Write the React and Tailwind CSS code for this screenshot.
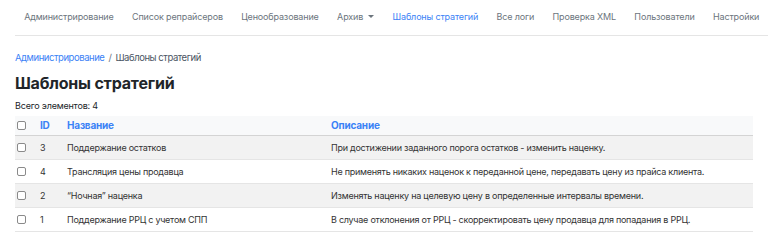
import React from "react";

const navItems = [
  { label: "Администрирование" },
  { label: "Список репрайсеров" },
  { label: "Ценообразование" },
  { label: "Архив", dropdown: true },
  { label: "Шаблоны стратегий", active: true },
  { label: "Все логи" },
  { label: "Проверка XML" },
  { label: "Пользователи" },
  { label: "Настройки" },
];

const rows = [
  { id: 3, name: "Поддержание остатков", desc: "При достижении заданного порога остатков - изменить наценку." },
  { id: 4, name: "Трансляция цены продавца", desc: "Не применять никаких наценок к переданной цене, передавать цену из прайса клиента." },
  { id: 2, name: "\u201cНочная\u201d наценка", desc: "Изменять наценку на целевую цену в определенные интервалы времени." },
  { id: 1, name: "Поддержание РРЦ с учетом СПП", desc: "В случае отклонения от РРЦ - скорректировать цену продавца для попадания в РРЦ." },
];

const Box = () => (
  <span className="block w-[9px] h-[9px] border border-[#8a8a8a] rounded-[2px] bg-white" />
);

export default function App() {
  return (
    <div className="w-[768px] h-[245px] bg-white overflow-hidden text-[#212529]" style={{ fontFamily: "Inter, 'Noto Sans', sans-serif" }}>
      <div className="pl-[15px]">
        <nav className="flex items-center h-[36px] pb-[2px] border-b border-[#e5e5e5] text-[9px] text-[#6c757d] tracking-[-0.15px]">
          {navItems.map((item) => (
            <span
              key={item.label}
              className={`px-[9.2px] flex items-center whitespace-nowrap ${item.active ? "text-[#3b82f6]" : ""}`}
            >
              {item.label}
              {item.dropdown && (
                <span className="ml-[5px] inline-block w-0 h-0 border-x-[3px] border-x-transparent border-t-[3.5px] border-t-[#6c757d]" />
              )}
            </span>
          ))}
        </nav>
      </div>
      <div className="px-[15px]">
        <div className="mt-[15px] text-[9.5px] tracking-[-0.45px] flex gap-[4px]">
          <span className="text-[#3b82f6]">Администрирование</span>
          <span className="text-[#6c757d]">/</span>
          <span className="text-[#4b5563]">Шаблоны стратегий</span>
        </div>
        <h1 className="mt-[7px] text-[16px] font-bold leading-[22px] tracking-[-0.2px]">Шаблоны стратегий</h1>
        <div className="mt-[6px] text-[9px] leading-[12px] tracking-[-0.2px]">Всего элементов: 4</div>
        <table className="mt-[4px] w-full border-collapse text-[9px] tracking-[-0.25px]">
          <thead>
            <tr className="bg-[#f8f9fa] border-b border-[#d4d4d4] h-[19px] text-[10px] tracking-[-0.2px]">
              <th className="w-[22px] pl-[2px] text-left"><Box /></th>
              <th className="w-[30px] pl-[3px] text-left font-bold text-[#3b82f6]">ID</th>
              <th className="w-[264px] text-left font-bold text-[#3b82f6]">Название</th>
              <th className="text-left font-bold text-[#3b82f6]">Описание</th>
            </tr>
          </thead>
          <tbody>
            {rows.map((r, i) => (
              <tr key={r.id} className={`h-[24px] border-b border-[#e5e5e5] ${i % 2 === 0 ? "bg-[#f2f2f2]" : "bg-white"}`}>
                <td className="pl-[2px]"><Box /></td>
                <td className="pl-[3px] text-[#333]">{r.id}</td>
                <td className="text-[#333]">{r.name}</td>
                <td className="text-[#333]">{r.desc}</td>
              </tr>
            ))}
          </tbody>
        </table>
      </div>
    </div>
  );
}
